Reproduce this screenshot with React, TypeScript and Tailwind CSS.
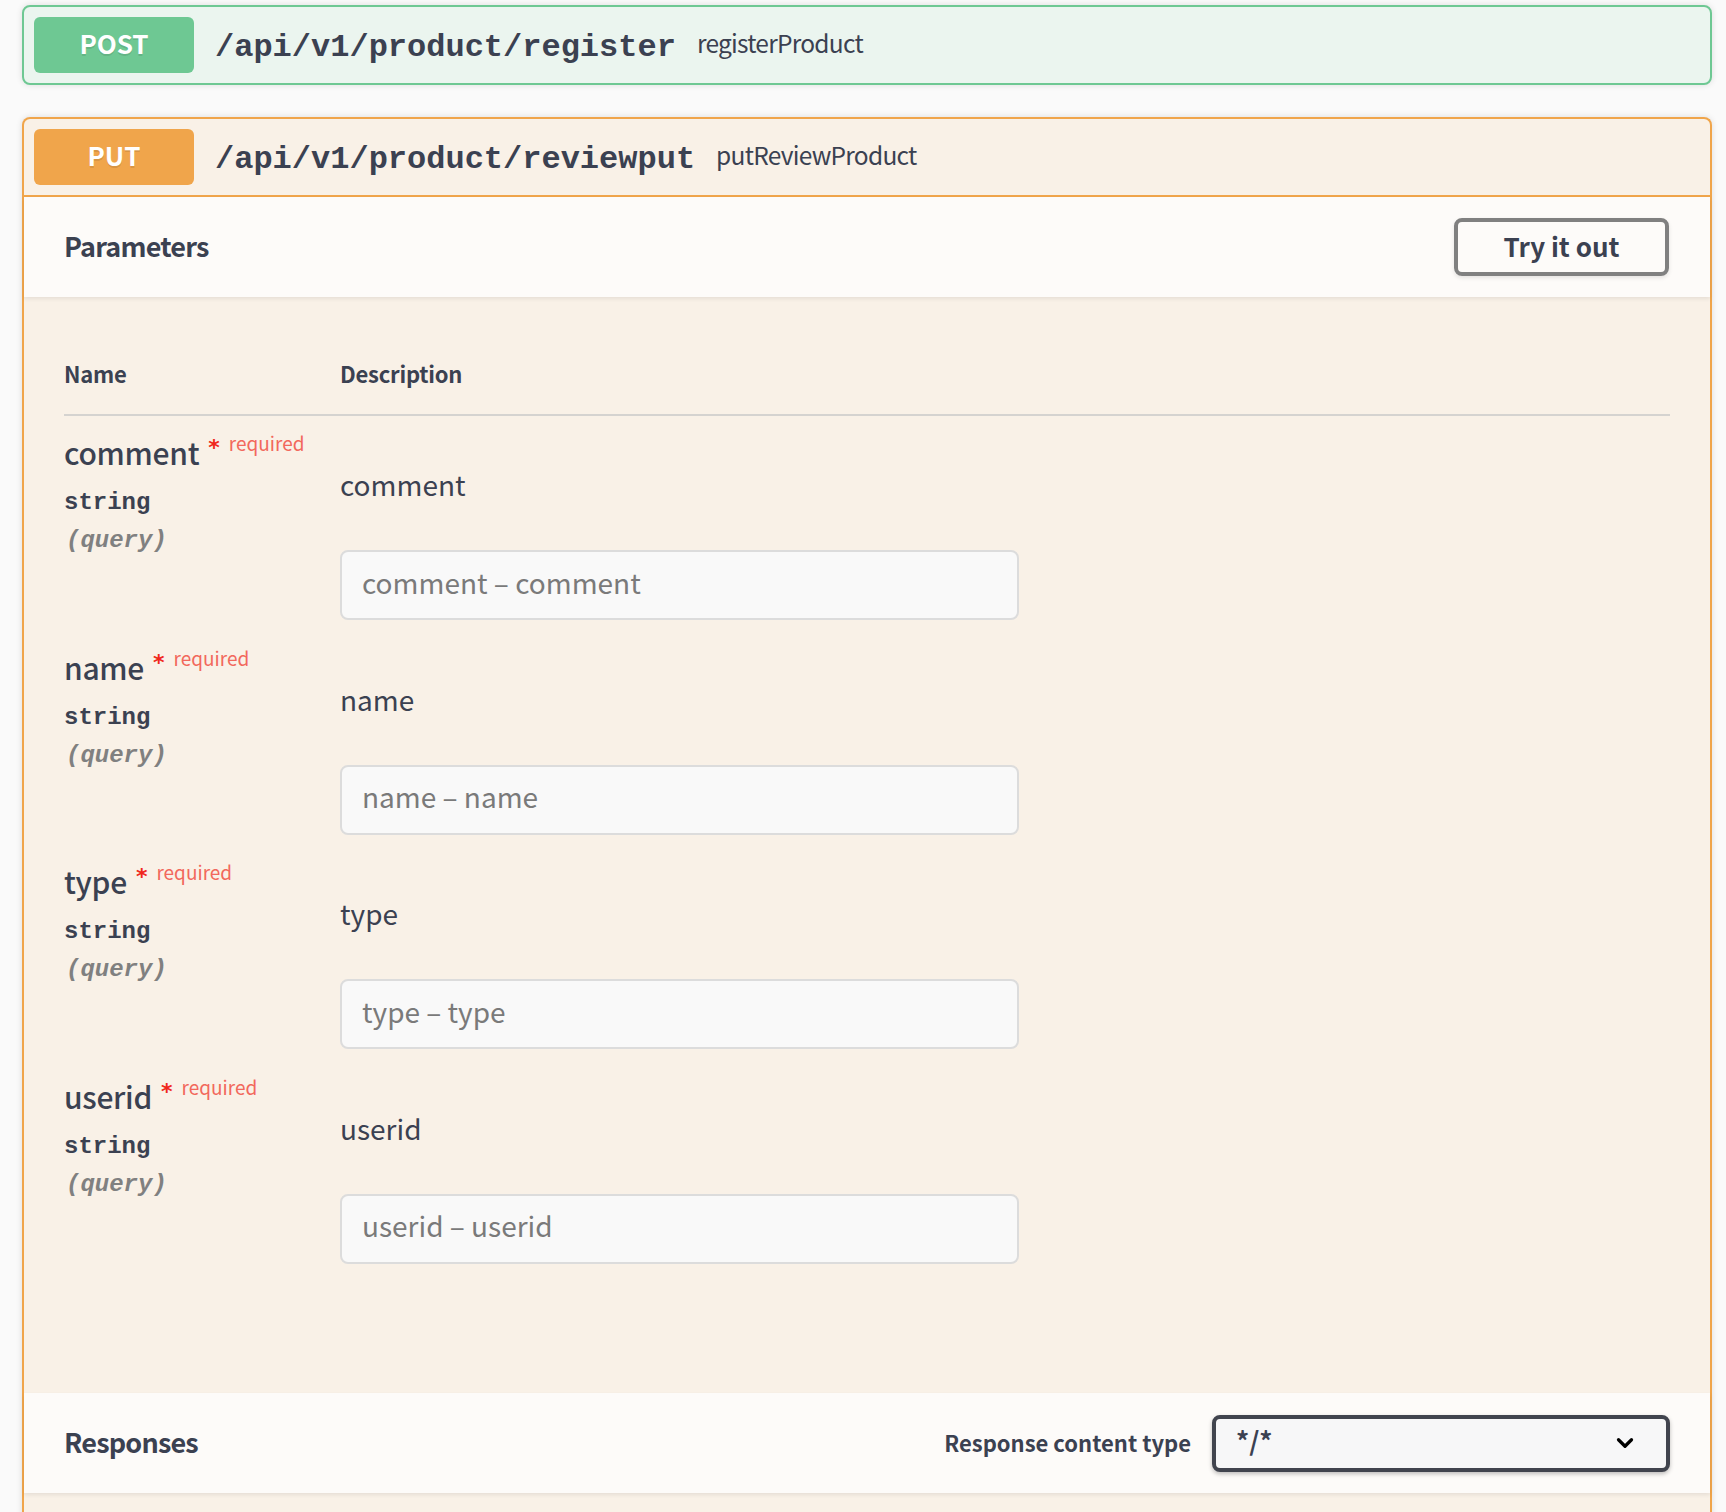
import { ChevronDown } from "lucide-react";

const SANS = "font-['Noto_Sans_CJK_KR',sans-serif]";
const MONO = "font-['Liberation_Mono',monospace]";

type Param = { name: string };

const params: Param[] = [{ name: "comment" }, { name: "name" }, { name: "type" }, { name: "userid" }];

function ParamRow({ p }: { p: Param }) {
  return (
    <div className="flex h-[214.5px]">
      <div className="w-[276px] shrink-0">
        <div className="mt-[18px] flex items-start h-[36px]">
          <span className={`${SANS} text-[30px] leading-[36px] font-medium tracking-[-0.01em] text-[#3b4151]`}>{p.name}</span>
          <span className="ml-[9px] mt-[3px] font-['DejaVu_Sans',sans-serif] text-[22px] leading-[22px] font-bold text-[#f0281c]">*</span>
          <span className={`${SANS} ml-[9px] -mt-[3px] text-[19px] leading-[24px] text-[#f2685c]`}>required</span>
        </div>
        <div className={`${MONO} mt-[18px] text-[24px] leading-[30px] font-bold text-[#3b4151]`}>string</div>
        <div className={`${MONO} mt-[8px] ml-[2px] text-[24px] leading-[30px] font-bold italic text-[#808080]`}>(query)</div>
      </div>
      <div className="flex-1">
        <p className={`${SANS} mt-[46px] text-[28px] leading-[44px] text-[#3b4151]`}>{p.name}</p>
        <input
          type="text"
          placeholder={`${p.name} \u2013 ${p.name}`}
          className={`${SANS} mt-[44px] block w-[679px] h-[70px] rounded-[8px] border-2 border-[#dcdcdc] bg-[#f9f9f9] px-[20px] pb-[7px] text-[28px] text-[#3b4151] placeholder:text-[#7a7a7a] outline-none`}
        />
      </div>
    </div>
  );
}

function Badge({ label, color }: { label: string; color: string }) {
  return (
    <div
      className={`${color} w-[160px] h-[56px] rounded-[6px] flex items-center justify-center pb-[5px] text-[26px] font-bold text-white [text-shadow:0_2px_0_rgba(0,0,0,0.1)]`}
    >
      {label}
    </div>
  );
}

export default function App() {
  return (
    <div className={`${SANS} min-h-screen bg-[#fafafa] pt-[5px] pl-[22px]`}>
      {/* POST */}
      <div className="w-[1690px] rounded-[8px] border-2 border-[#6ec893] bg-[#ebf5ef] shadow-[0_0_6px_rgba(0,0,0,0.12)]">
        <div className="flex items-center p-[10px]">
          <Badge label="POST" color="bg-[#6ec893]" />
          <span className={`${MONO} px-[21px] pt-[6px] text-[32px] font-bold text-[#3b4151]`}>/api/v1/product/register</span>
          <span className="pb-[4px] text-[24.5px] tracking-[-0.03em] text-[#3b4151]">registerProduct</span>
        </div>
      </div>

      {/* PUT */}
      <div className="mt-[32px] w-[1690px] rounded-t-[8px] border-2 border-b-0 border-[#f0a54b] bg-[#f9f1e7] shadow-[0_0_6px_rgba(0,0,0,0.12)]">
        <div className="flex items-center p-[10px] border-b-2 border-[#f0a54b]">
          <Badge label="PUT" color="bg-[#f0a54b]" />
          <span className={`${MONO} px-[21px] pt-[6px] text-[32px] font-bold text-[#3b4151]`}>/api/v1/product/reviewput</span>
          <span className="pb-[4px] text-[24.5px] tracking-[-0.03em] text-[#3b4151]">putReviewProduct</span>
        </div>

        <div className="h-[100px] flex items-center justify-between px-[40px] bg-[#fdfbf9] shadow-[0_2px_4px_rgba(0,0,0,0.08)]">
          <h4 className="pb-[2px] text-[27px] tracking-[-0.03em] font-bold text-[#3b4151]">Parameters</h4>
          <button className="w-[215px] h-[58px] mr-[1px] pb-[4px] rounded-[8px] border-4 border-[#808080] text-[26px] font-bold text-[#3b4151] shadow-[0_2px_4px_rgba(0,0,0,0.1)]">
            Try it out
          </button>
        </div>

        <div className="px-[40px] pt-[40px] pb-[119px]">
          <div className="flex h-[79px] items-center pb-[4px] border-b-2 border-[#d5d3d0] text-[22px] tracking-[-0.01em] font-bold text-[#3b4151]">
            <div className="w-[276px]">Name</div>
            <div>Description</div>
          </div>
          {params.map((p) => (
            <ParamRow key={p.name} p={p} />
          ))}
        </div>

        <div className="h-[100px] flex items-center justify-between px-[40px] bg-[#fdfbf9] shadow-[0_2px_4px_rgba(0,0,0,0.08)]">
          <h4 className="pb-[2px] text-[27px] tracking-[-0.03em] font-bold text-[#3b4151]">Responses</h4>
          <div className="flex items-center">
            <span className="pb-[2px] text-[22px] font-bold text-[#3b4151]">Response content type</span>
            <div className="ml-[21px] w-[458px] h-[57px] rounded-[8px] border-4 border-[#41444e] bg-[#f7f7f8] flex items-center justify-between pl-[20px] pr-[28px] shadow-[0_2px_4px_rgba(0,0,0,0.25)]">
              <span className="text-[26px] font-bold text-[#3b4151] -mt-[8px]">*/*</span>
              <ChevronDown className="w-[26px] h-[26px] text-black" strokeWidth={3} />
            </div>
          </div>
        </div>
        <div className="h-[30px]" />
      </div>
    </div>
  );
}
